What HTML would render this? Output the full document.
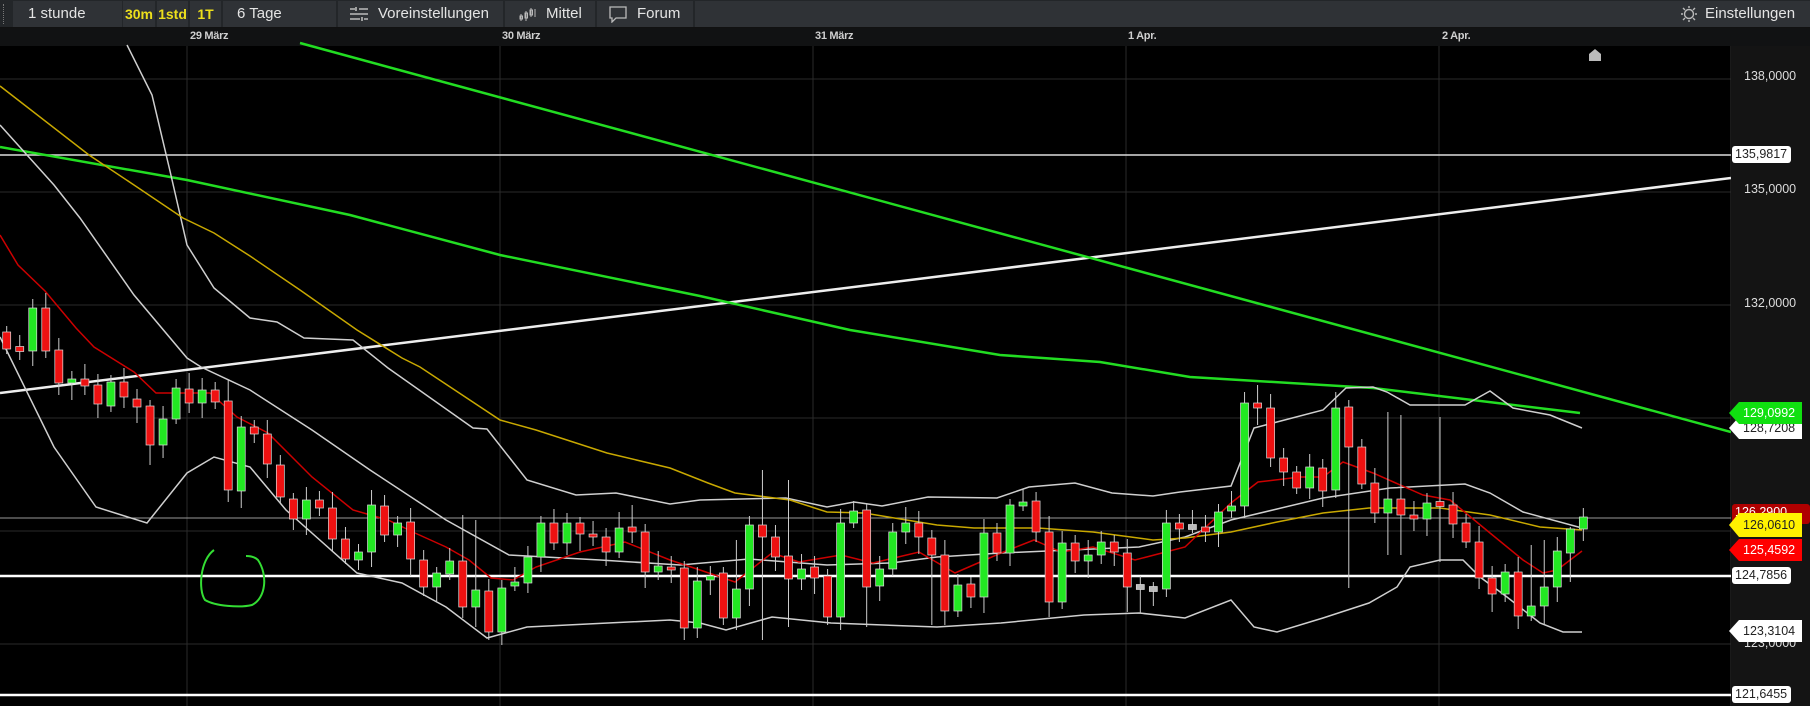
<!DOCTYPE html>
<html><head><meta charset="utf-8">
<style>
*{margin:0;padding:0;box-sizing:border-box}
body{width:1810px;height:706px;background:#000;overflow:hidden;font-family:"Liberation Sans",sans-serif;position:relative}
#tb{position:absolute;left:0;top:0;width:1810px;height:28px;background:#232629;border-bottom:1px solid #111}
.b{position:absolute;top:1px;height:26px;background:#2f3236;color:#e4e4e4;font-size:15px;line-height:26px}
.y{color:#ecdf1c;font-weight:bold;font-size:14px;text-align:center}
#dr{position:absolute;left:0;top:28px;width:1810px;height:18px;background:#111213}
.d{position:absolute;top:30px;color:#cfcfcf;font-size:11px;font-weight:bold;letter-spacing:-0.3px}
#ax{position:absolute;left:1731px;top:46px;width:79px;height:660px;background:#141414}
.l{position:absolute;font-size:12.5px;color:#ddd;left:1744px}
.bx{position:absolute;left:1732px;height:17px;line-height:17px;font-size:12.5px;padding:0 4px 0 3px;border-radius:3px;background:#fff;color:#222}
.ar{position:absolute;left:1729px;height:22px;line-height:22px;font-size:12.5px;padding-left:14px;width:73px;clip-path:polygon(0 50%,10px 0,100% 0,100% 100%,10px 100%)}
</style></head><body>
<div id="tb">
<div style="position:absolute;left:3px;top:4px;width:2px;height:20px;border-left:1px dotted #777"></div>
<div class="b" style="left:13px;width:109px;padding-left:15px">1 stunde</div>
<div class="b y" style="left:123px;width:32px">30m</div>
<div class="b y" style="left:157px;width:31px">1std</div>
<div class="b y" style="left:190px;width:31px">1T</div>
<div class="b" style="left:223px;width:113px;padding-left:14px">6 Tage</div>
<div class="b" style="left:338px;width:165px;padding-left:40px">Voreinstellungen
<svg style="position:absolute;left:12px;top:6px" width="18" height="14" stroke="#bbb" stroke-width="1.6" fill="none"><path d="M0 2h5M9 2h9M6 0v4M0 7h18M0 12h10M14 12h4M12 10v4"/></svg></div>
<div class="b" style="left:505px;width:90px;padding-left:41px">Mittel
<svg style="position:absolute;left:14px;top:5px" width="18" height="16" stroke="#bbb" stroke-width="1" fill="none"><path d="M2 8v7M7 5v10M12 2v9M16 3v8"/><rect x="1" y="10" width="2.5" height="3"/><rect x="6" y="7" width="2.5" height="5"/><rect x="11" y="4" width="2.5" height="5"/></svg></div>
<div class="b" style="left:597px;width:96px;padding-left:40px">Forum
<svg style="position:absolute;left:12px;top:5px" width="18" height="17" stroke="#bbb" stroke-width="1.3" fill="none"><path d="M1 1h16v11H7l-4 4v-4H1z"/></svg></div>
<div class="b" style="left:695px;width:1115px;background:#2f3236"></div>
<div class="b" style="left:1680px;width:128px;padding-left:25px">Einstellungen
<svg style="position:absolute;left:1px;top:5px" width="16" height="16" stroke="#bbb" stroke-width="1.4" fill="none"><circle cx="8" cy="8" r="4.5"/><path d="M8 0v2M8 14v2M0 8h2M14 8h2M2 2l2 2M12 12l2 2M2 14l2-2M12 4l2-2"/></svg></div>
</div>
<div id="dr"></div>
<div class="d" style="left:190px">29 März</div>
<div class="d" style="left:502px">30 März</div>
<div class="d" style="left:815px">31 März</div>
<div class="d" style="left:1128px">1 Apr.</div>
<div class="d" style="left:1442px">2 Apr.</div>
<div id="ax"></div>
<svg id="ch" style="position:absolute;left:0;top:0" width="1731" height="706"></svg>
<div class="l" style="top:69px">138,0000</div>
<div class="l" style="top:182px">135,0000</div>
<div class="l" style="top:296px">132,0000</div>
<div class="l" style="top:636px">123,0000</div>
<div class="bx" style="top:146px">135,9817</div>
<div class="ar" style="top:417px;background:#fff;color:#222">128,7208</div>
<div class="ar" style="top:402px;background:#10e010;color:#fff">129,0992</div>
<div class="bx" style="top:504px;background:#b00000;color:#fff;width:78px;height:20px;border-radius:3px">126,2900</div>
<div class="ar" style="top:513px;background:#fff200;color:#222;height:24px;line-height:24px">126,0610</div>
<div class="ar" style="top:539px;background:#f00;color:#fff">125,4592</div>
<div class="bx" style="top:567px">124,7856</div>
<div class="ar" style="top:620px;background:#fff;color:#222">123,3104</div>
<div class="bx" style="top:686px">121,6455</div>
<script>
const s=document.getElementById('ch');let h='';
[79,192,305,418,531,644].forEach(y=>h+=`<line x1="0" x2="1731" y1="${y}" y2="${y}" stroke="#2a2a2a" stroke-width="1"/>`);
[187,500,813,1126,1439].forEach(x=>h+=`<line x1="${x}" x2="${x}" y1="46" y2="706" stroke="#2a2a2a" stroke-width="1"/>`);
h+=`<line x1="1731" x2="1731" y1="46" y2="706" stroke="#333"/>`;
function pl(p,c,w){h+=`<polyline fill="none" stroke="${c}" stroke-width="${w}" points="${p.map(q=>q.join(',')).join(' ')}"/>`;}
// horizontal lines
h+=`<line x1="0" x2="1731" y1="155" y2="155" stroke="#ddd" stroke-width="1.5"/>`;
h+=`<line x1="0" x2="1731" y1="518" y2="518" stroke="#999" stroke-width="1"/>`;
h+=`<line x1="0" x2="1731" y1="576" y2="576" stroke="#fff" stroke-width="2.5"/>`;
h+=`<line x1="0" x2="1731" y1="695" y2="695" stroke="#fff" stroke-width="2.5"/>`;
// trend lines
h+=`<line x1="0" y1="393" x2="1731" y2="178" stroke="#eee" stroke-width="2.5"/>`;
h+=`<line x1="300" y1="43" x2="1731" y2="432" stroke="#22dd22" stroke-width="2.5"/>`;
pl([[0,147],[187,180],[350,215],[500,255],[700,296],[850,330],[1000,355],[1100,362],[1190,377],[1373,388],[1580,413]],'#22dd22',2.5);
// BB upper
pl([[127,45],[152,95],[170,171],[187,245],[214,288],[250,318],[277,322],[304,338],[353,340],[388,368],[473,428],[487,429],[527,480],[576,495],[616,493],[670,504],[700,500],[786,498],[827,507],[854,502],[882,506],[928,497],[997,498],[1029,487],[1075,483],[1112,493],[1153,496],[1180,492],[1231,486],[1254,428],[1323,410],[1346,388],[1373,387],[1387,392],[1410,405],[1465,405],[1490,391],[1513,408],[1550,415],[1582,428]],'#cfcfcf',1.5);
// BB middle
pl([[0,125],[27,155],[54,185],[80,218],[134,295],[187,358],[201,367],[250,390],[312,430],[370,470],[446,520],[509,555],[600,560],[680,565],[749,559],[827,565],[891,563],[937,557],[1001,553],[1139,547],[1185,537],[1231,520],[1323,498],[1390,488],[1465,484],[1490,493],[1523,512],[1582,528]],'#cfcfcf',1.5);
// BB lower
pl([[0,337],[54,447],[96,507],[147,523],[187,473],[214,457],[250,467],[286,510],[357,573],[402,583],[446,607],[487,638],[527,627],[670,620],[700,623],[726,630],[772,617],[831,623],[937,627],[1001,623],[1084,615],[1139,613],[1185,618],[1231,600],[1254,627],[1277,632],[1323,618],[1369,603],[1397,587],[1410,567],[1440,560],[1463,560],[1480,577],[1507,597],[1540,623],[1563,632],[1582,632]],'#cfcfcf',1.5);
// yellow
pl([[0,86],[89,155],[134,185],[183,218],[214,233],[250,256],[300,290],[357,330],[402,358],[420,367],[500,420],[536,430],[607,453],[670,468],[708,483],[735,493],[790,500],[827,512],[864,513],[937,525],[974,528],[1038,528],[1093,532],[1153,540],[1185,538],[1231,532],[1277,522],[1323,513],[1369,508],[1440,508],[1490,515],[1540,527],[1582,530]],'#c8a800',1.5);
// red MA
pl([[0,235],[18,265],[45,291],[76,328],[94,347],[134,372],[156,393],[210,393],[237,417],[268,433],[312,477],[353,510],[388,520],[415,533],[446,547],[469,560],[491,578],[513,580],[536,567],[580,552],[625,542],[670,560],[700,570],[735,582],[772,553],[799,562],[841,555],[873,563],[919,552],[955,573],[1001,553],[1034,540],[1061,552],[1093,547],[1135,560],[1185,547],[1231,503],[1258,482],[1300,477],[1323,477],[1343,462],[1373,473],[1423,495],[1450,500],[1490,533],[1523,560],[1543,573],[1557,570],[1582,551]],'#cc0000',1.5);
// candles [top,bottom,green?]
const C=[[332,349,0],[348,350,0],[308,351,1],[308,351,0],[350,383,0],[379,383,1],[379,386,0],[385,404,0],[382,406,1],[382,397,0],[399,407,0],[406,445,0],[419,445,1],[388,419,1],[389,403,0],[390,403,1],[390,402,0],[401,490,0],[427,491,1],[427,434,0],[434,464,0],[465,497,0],[499,519,0],[500,519,1],[500,508,0],[508,539,0],[539,559,0],[552,560,1],[505,552,1],[506,535,0],[523,535,1],[522,559,0],[560,587,0],[573,587,1],[561,574,1],[561,607,0],[590,607,1],[591,632,0],[588,632,1],[582,586,1],[557,583,1],[523,557,1],[523,543,0],[523,543,1],[523,534,0],[534,537,0],[537,552,0],[528,552,1],[527,532,0],[532,572,0],[566,572,1],[567,570,0],
[568,628,0],[581,628,1],[576,580,1],[573,618,0],[589,618,1],[525,589,1],[525,537,0],[537,557,0],[556,579,0],[569,579,1],[567,578,0],[576,617,0],[523,617,1],[511,523,1],[510,587,0],[569,586,1],[532,569,1],[523,532,1],[523,537,0],[538,555,0],[555,611,0],[585,611,1],[584,597,0],[533,597,1],[533,553,0],[505,553,1],[502,506,1],[501,532,0],[532,602,0],[543,602,1],[543,561,0],[555,561,1],[542,555,1],[542,552,0],[553,587,0],[586,588,2],[588,590,2],[523,589,1],[523,529,0],[526,528,2],[527,532,0],[512,532,1],[506,511,1],[403,506,1],[403,408,0],[408,458,0],[458,472,0],[472,488,0],[467,488,1],[468,491,0],[408,490,1],[407,447,0],[447,484,0],[483,513,0],[499,513,1],[499,515,0],
[515,519,0],[503,519,1],[503,505,0],[505,524,0],[523,542,0],[542,578,0],[578,594,0],[572,594,1],[572,616,0],[606,616,1],[587,606,1],[551,587,1],[529,553,1],[517,529,1]];
const W={3:293,11:465,17:380,18:508,25:530,35:515,36:520,48:505,52:620,56:540,58:470,60:480,66:620,71:630,85:604,86:610,96:385,103:400,106:412,107:415,110:417,117:545,118:540,120:527,121:508};
const WL={11:465,18:508,36:627,52:640,58:640,60:627,66:627,71:625,86:612,87:613,103:588,106:555,107:555,110:562,114:612,118:625,120:582};
C.forEach((c,i)=>{const x=6.7+13.03*i;let t=c[0],b=c[1];const hi=W[i]!==undefined&&W[i]<t?W[i]:t-6-(i*7%11);const lo=WL[i]!==undefined&&WL[i]>b?WL[i]:b+5+(i*5%13);
h+=`<line x1="${x}" x2="${x}" y1="${hi}" y2="${lo}" stroke="#ccc" stroke-width="1"/>`;
const col=c[2]==1?'#22e822':c[2]==2?'#bbb':'#ee1111';if(b-t<3){t-=1.5;b+=1.5;}
h+=`<rect x="${x-4}" y="${t}" width="8" height="${b-t}" fill="${col}" stroke="#ddd" stroke-width="0.7"/>`;});
// hand-drawn circle
h+=`<path d="M214 550 C200 560 198 590 205 600 C215 606 240 608 252 605 C266 598 268 575 258 560 C255 557 250 556 246 556" fill="none" stroke="#33dd33" stroke-width="2"/>`;
// marker
h+=`<path d="M1589 61 V54 L1595 49 L1601 54 V61 Z" fill="#bbb"/>`;
s.innerHTML=h;
</script>
</body></html>
